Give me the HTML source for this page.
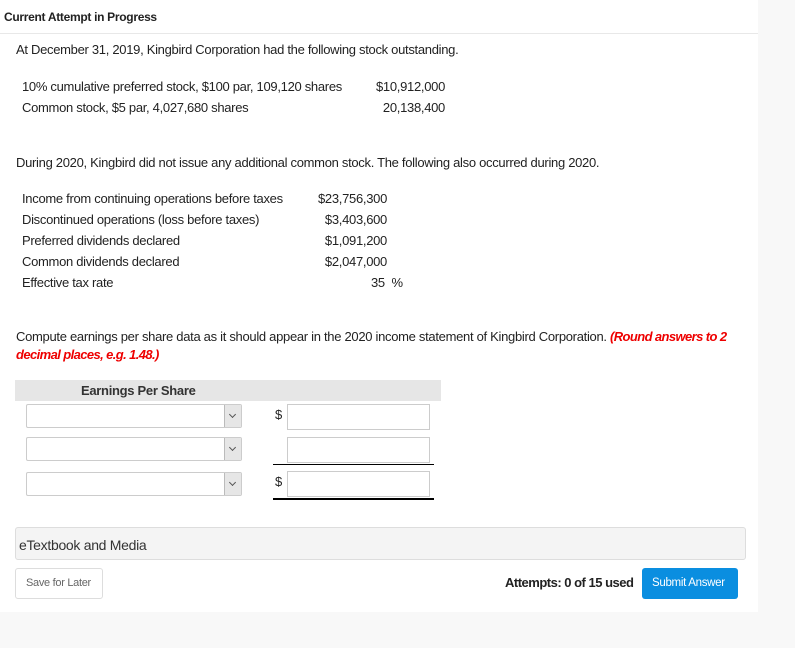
<!DOCTYPE html>
<html><head><style>
body{margin:0;background:#f8f8f8;font-family:"Liberation Sans",sans-serif;color:#222;width:795px;height:648px;position:relative;overflow:hidden}
.p{position:absolute;left:0;top:0;width:758px;height:612px;background:#fff}
.t{position:absolute;font-size:13px;white-space:nowrap;letter-spacing:-0.3px}
.r{text-align:right}
.sel{position:absolute;left:26px;width:216px;height:24px;border:1px solid #ccc;border-radius:2px;box-sizing:border-box;background:#fff}
.sel i{position:absolute;right:0;top:0;width:16px;height:22px;background:#e6e6e6;border-left:1px solid #bbb}
.sel i:after{content:"";position:absolute;left:5px;top:7px;width:4px;height:4px;border-right:1px solid #555;border-bottom:1px solid #555;transform:rotate(45deg)}
.in{position:absolute;left:287px;width:143px;height:26px;border:1px solid #ccc;box-sizing:border-box;background:#fff}
</style></head><body>
<div class="p"></div>
<div class="t" style="left:4px;top:10px;font-weight:bold;font-size:12px">Current Attempt in Progress</div>
<div style="position:absolute;left:0;top:33px;width:758px;height:1px;background:#e8e8e8"></div>
<div class="t" style="left:16px;top:42px">At December 31, 2019, Kingbird Corporation had the following stock outstanding.</div>
<div class="t" style="left:22px;top:79px">10% cumulative preferred stock, $100 par, 109,120 shares</div>
<div class="t r" style="left:345px;width:100px;top:79px">$10,912,000</div>
<div class="t" style="left:22px;top:100px">Common stock, $5 par, 4,027,680 shares</div>
<div class="t r" style="left:345px;width:100px;top:100px">20,138,400</div>
<div class="t" style="left:16px;top:155px">During 2020, Kingbird did not issue any additional common stock. The following also occurred during 2020.</div>
<div class="t" style="left:22px;top:191px">Income from continuing operations before taxes</div>
<div class="t r" style="left:287px;width:100px;top:191px">$23,756,300</div>
<div class="t" style="left:22px;top:212px">Discontinued operations (loss before taxes)</div>
<div class="t r" style="left:287px;width:100px;top:212px">$3,403,600</div>
<div class="t" style="left:22px;top:233px">Preferred dividends declared</div>
<div class="t r" style="left:287px;width:100px;top:233px">$1,091,200</div>
<div class="t" style="left:22px;top:254px">Common dividends declared</div>
<div class="t r" style="left:287px;width:100px;top:254px">$2,047,000</div>
<div class="t" style="left:22px;top:275px">Effective tax rate</div>
<div class="t" style="left:371px;top:275px">35 &nbsp;%</div>
<div class="t" style="left:16px;top:329px">Compute earnings per share data as it should appear in the 2020 income statement of Kingbird Corporation. <b style="color:#e00;font-style:italic;letter-spacing:-0.6px">(Round answers to 2</b></div>
<div class="t" style="left:16px;top:347px;color:#e00;font-weight:bold;font-style:italic;letter-spacing:-0.6px">decimal places, e.g. 1.48.)</div>
<div style="position:absolute;left:15px;top:380px;width:426px;height:21px;background:#e6e6e6"></div>
<div class="t" style="left:81px;top:383px;font-weight:bold;color:#333">Earnings Per Share</div>
<div class="sel" style="top:404px"><i></i></div>
<div class="sel" style="top:437px"><i></i></div>
<div class="sel" style="top:472px"><i></i></div>
<div class="t" style="left:275px;top:407px;font-size:13px">$</div>
<div class="t" style="left:275px;top:474px;font-size:13px">$</div>
<div class="in" style="top:404px"></div>
<div class="in" style="top:437px"></div>
<div class="in" style="top:471px"></div>
<div style="position:absolute;left:273px;top:464px;width:161px;height:1px;background:#000"></div>
<div style="position:absolute;left:273px;top:498px;width:161px;height:2px;background:#000"></div>
<div style="position:absolute;left:15px;top:527px;width:731px;height:33px;background:#f4f4f4;border:1px solid #ddd;border-radius:3px;box-sizing:border-box"></div>
<div class="t" style="left:19px;top:537px;font-size:14px;color:#333">eTextbook and Media</div>
<div style="position:absolute;left:15px;top:568px;width:88px;height:31px;border:1px solid #ddd;border-radius:3px;box-sizing:border-box"></div>
<div class="t" style="left:26px;top:577px;font-size:11px;color:#666">Save for Later</div>
<div class="t" style="left:505px;top:575px;font-weight:bold;color:#222;letter-spacing:-0.5px">Attempts: 0 of 15 used</div>
<div style="position:absolute;left:642px;top:568px;width:96px;height:31px;background:#0a8ee0;border-radius:3px"></div>
<div class="t" style="left:652px;top:577px;font-size:11.5px;color:#fff">Submit Answer</div>
</body></html>
